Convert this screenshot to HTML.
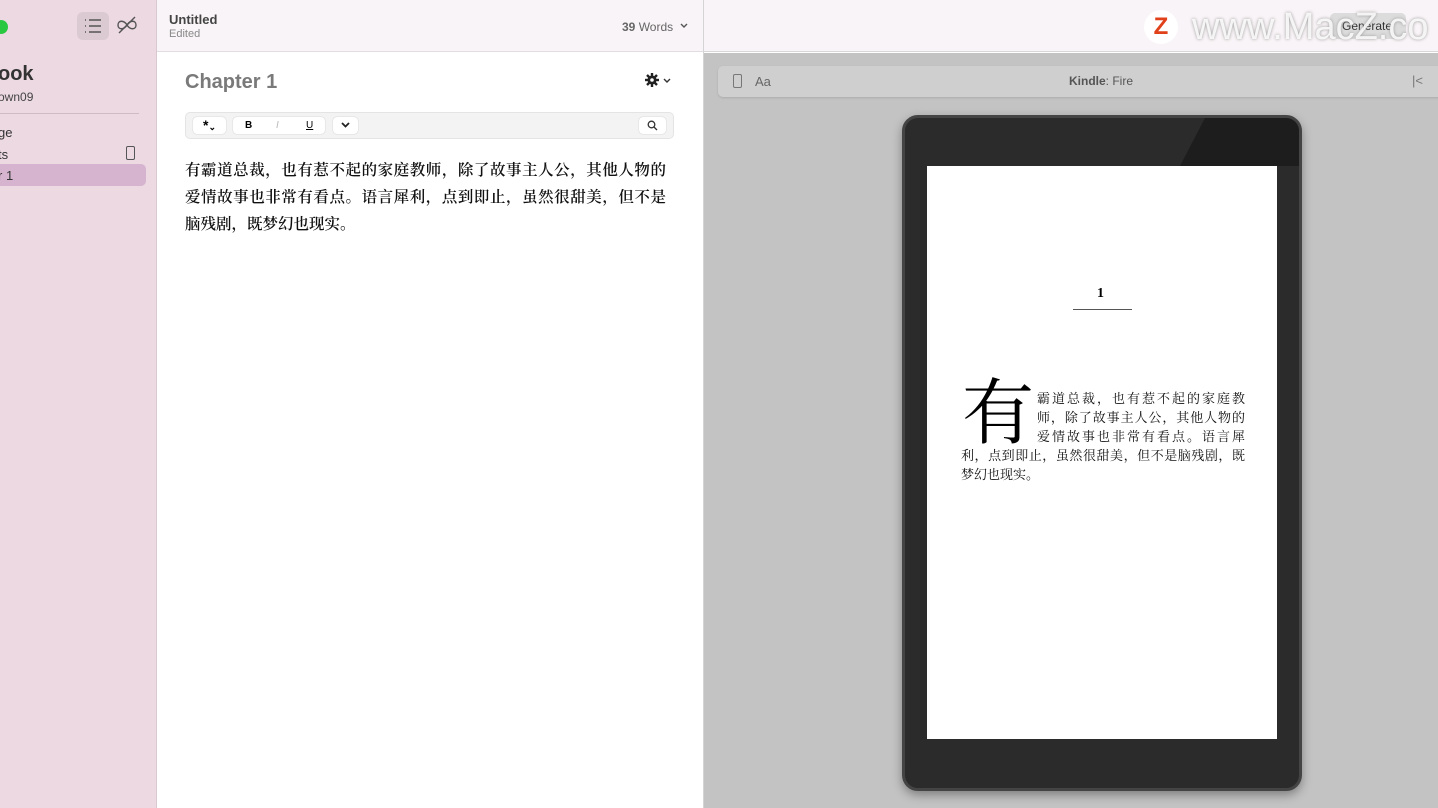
<!DOCTYPE html>
<html><head><meta charset="utf-8"><style>
*{margin:0;padding:0;box-sizing:border-box}
body{width:1438px;height:808px;overflow:hidden;position:relative;font-family:"Liberation Sans","Noto Sans CJK SC",sans-serif;background:#fff}
.abs{position:absolute}
.cjk{font-family:"Liberation Serif","Noto Serif CJK SC",serif}
.ln{white-space:nowrap;text-align:justify;text-align-last:justify}
</style></head><body>
<!-- sidebar -->
<div class="abs" style="left:0;top:0;width:157px;height:808px;background:#ecd9e2;border-right:1px solid #d9c8d0"></div>
<div class="abs" style="left:-6px;top:20px;width:14px;height:14px;border-radius:50%;background:#2ac840"></div>
<div class="abs" style="left:77px;top:12px;width:32px;height:28px;border-radius:6px;background:#dccad3"></div>
<svg class="abs" style="left:84px;top:18px" width="18" height="16" viewBox="0 0 18 16" stroke="#555" stroke-width="1.5"><line x1="1" y1="2" x2="2" y2="2"/><line x1="5" y1="2" x2="17" y2="2"/><line x1="1" y1="8" x2="2" y2="8"/><line x1="5" y1="8" x2="17" y2="8"/><line x1="1" y1="14" x2="2" y2="14"/><line x1="5" y1="14" x2="17" y2="14"/></svg>
<svg class="abs" style="left:116px;top:16px" width="22" height="18" viewBox="0 0 22 18" fill="none" stroke="#555" stroke-width="1.4"><path d="M11 9C8 4 2 4 2 9s6 5 9 0 9-5 9 0-6 5-9 0"/><line x1="3" y1="17" x2="19" y2="1"/></svg>
<div class="abs" style="left:-2px;top:63px;font-size:20px;font-weight:bold;color:#333">ook</div>
<div class="abs" style="left:-2px;top:90px;font-size:12px;color:#444">own09</div>
<div class="abs" style="left:0;top:113px;width:139px;height:1px;background:#cdbcc4"></div>
<div class="abs" style="left:-2px;top:125px;font-size:13px;color:#333">ge</div>
<div class="abs" style="left:-2px;top:147px;font-size:13px;color:#333">ts</div>
<div class="abs" style="left:126px;top:146px;width:9px;height:14px;border:1.3px solid #555;border-radius:2px"></div>
<div class="abs" style="left:-10px;top:164px;width:156px;height:22px;border-radius:5px;background:#d6b4cf"></div>
<div class="abs" style="left:-2px;top:168px;font-size:13px;color:#333">r 1</div>
<!-- editor header -->
<div class="abs" style="left:157px;top:0;width:546px;height:52px;background:#f9f4f7;border-bottom:1px solid #e2dde0"></div>
<div class="abs" style="left:169px;top:12px;font-size:13px;font-weight:bold;color:#444">Untitled</div>
<div class="abs" style="left:169px;top:28px;font-size:11px;color:#888">Edited</div>
<div class="abs" style="left:622px;top:20px;font-size:12px;color:#666"><b>39</b> Words</div>
<svg class="abs" style="left:680px;top:23px" width="8" height="6" viewBox="0 0 8 6" fill="none" stroke="#555" stroke-width="1.4"><path d="M1 1l3 3 3-3"/></svg>
<div class="abs" style="left:703px;top:0;width:1px;height:808px;background:#d4d4d4"></div>
<div class="abs" style="left:185px;top:71px;font-size:20px;font-weight:bold;color:#7a7a7a">Chapter 1</div>
<svg class="abs" style="left:645px;top:73px" width="14" height="14" viewBox="0 0 14 14"><circle cx="7" cy="7" r="4.5" fill="#222"/><g stroke="#222" stroke-width="2.4"><line x1="7" y1="0" x2="7" y2="14"/><line x1="0" y1="7" x2="14" y2="7"/><line x1="2" y1="2" x2="12" y2="12"/><line x1="12" y1="2" x2="2" y2="12"/></g><circle cx="7" cy="7" r="1.8" fill="#fff"/></svg>
<svg class="abs" style="left:663px;top:78px" width="8" height="6" viewBox="0 0 8 6" fill="none" stroke="#333" stroke-width="1.4"><path d="M1 1l3 3 3-3"/></svg>
<div class="abs" style="left:185px;top:112px;width:489px;height:27px;background:#f3f3f3;border:1px solid #e4e4e4;border-radius:5px"></div>
<div class="abs" style="left:193px;top:117px;width:33px;height:17px;background:#fff;border-radius:4px;box-shadow:0 0 1px #aaa;font-size:14px;font-weight:bold;text-align:center;line-height:17px">*<span style="font-size:9px">&#8964;</span></div>
<div class="abs" style="left:233px;top:117px;width:92px;height:17px;background:#fff;border-radius:4px;box-shadow:0 0 1px #aaa;font-size:10px;line-height:17px"><b style="position:absolute;left:12px">B</b><i style="position:absolute;left:43px;color:#bbb">I</i><u style="position:absolute;left:73px">U</u></div>
<div class="abs" style="left:333px;top:117px;width:25px;height:17px;background:#fff;border-radius:4px;box-shadow:0 0 1px #aaa"></div>
<svg class="abs" style="left:341px;top:122px" width="9" height="7" viewBox="0 0 9 7" fill="none" stroke="#222" stroke-width="1.8"><path d="M1 1l3.5 3.5L8 1"/></svg>
<div class="abs" style="left:639px;top:117px;width:27px;height:17px;background:#fff;border-radius:4px;box-shadow:0 0 1px #aaa"></div>
<svg class="abs" style="left:647px;top:120px" width="11" height="11" viewBox="0 0 11 11" fill="none" stroke="#333" stroke-width="1.3"><circle cx="4.5" cy="4.5" r="3.3"/><line x1="7" y1="7" x2="10" y2="10"/></svg>
<div class="abs cjk" style="left:185px;top:157px;width:481px;font-size:15.5px;line-height:27px;color:#111;font-weight:600">
<div class="ln">有霸道总裁，也有惹不起的家庭教师，除了故事主人公，其他人物的</div>
<div class="ln">爱情故事也非常有看点。语言犀利，点到即止，虽然很甜美，但不是</div>
<div style="white-space:nowrap">脑残剧，既梦幻也现实。</div>
</div>
<!-- right pane -->
<div class="abs" style="left:704px;top:0;width:734px;height:52px;background:#f9f4f7;border-bottom:1px solid #d8d8d8"></div>
<div class="abs" style="left:1330px;top:13px;width:76px;height:26px;background:#dcdcdc;border-radius:5px"></div>
<div class="abs" style="left:1144px;top:10px;width:34px;height:34px;border-radius:50%;background:#fff;color:#e0401a;font-weight:bold;font-size:24px;text-align:center;line-height:34px">Z</div>
<div class="abs" style="left:1342px;top:19px;font-size:12px;color:#333">Generate</div>
<div class="abs" style="left:1192px;top:6px;font-size:38px;color:rgba(255,255,255,.85);text-shadow:0 0 3px #999;white-space:nowrap">www.MacZ.co</div>
<div class="abs" style="left:704px;top:53px;width:734px;height:755px;background:#c3c3c3"></div>
<div class="abs" style="left:718px;top:66px;width:730px;height:31px;background:#cfcfcf;border-radius:5px;box-shadow:0 1px 2px rgba(0,0,0,.12)"></div>
<div class="abs" style="left:733px;top:74px;width:9px;height:14px;border:1.2px solid #777;border-radius:2px"></div>
<div class="abs" style="left:755px;top:74px;font-size:13px;color:#666">Aa</div>
<div class="abs" style="left:1069px;top:74px;font-size:12px;color:#555"><b>Kindle</b>: Fire</div>
<div class="abs" style="left:1412px;top:73px;font-size:13px;color:#777">|&lt;</div>
<div class="abs" style="left:902px;top:115px;width:400px;height:676px;background:#2b2b2b;border-radius:16px;box-shadow:0 4px 10px rgba(0,0,0,.35);border:3px solid #444;overflow:hidden">
<div style="position:absolute;left:275px;top:0;width:125px;height:48px;background:#1d1d1d;clip-path:polygon(20% 0,100% 0,100% 100%,0 100%)"></div>
</div>
<div class="abs" style="left:927px;top:166px;width:350px;height:573px;background:#fff"></div>
<div class="abs cjk" style="left:1097px;top:286px;font-size:14px;font-weight:bold">1</div>
<div class="abs" style="left:1073px;top:309px;width:59px;height:1px;background:#555"></div>
<div class="abs cjk" style="left:962px;top:374px;font-size:72px;line-height:80px;color:#000">有</div>
<div class="abs cjk" style="left:1037px;top:389px;width:208px;font-size:13px;line-height:19px;color:#111">
<div class="ln">霸道总裁，也有惹不起的家庭教</div>
<div class="ln">师，除了故事主人公，其他人物的</div>
<div class="ln">爱情故事也非常有看点。语言犀</div>
</div>
<div class="abs cjk" style="left:961px;top:446px;width:284px;font-size:13px;line-height:19px;color:#111">
<div class="ln">利，点到即止，虽然很甜美，但不是脑残剧，既</div>
<div style="white-space:nowrap">梦幻也现实。</div>
</div>
</body></html>
